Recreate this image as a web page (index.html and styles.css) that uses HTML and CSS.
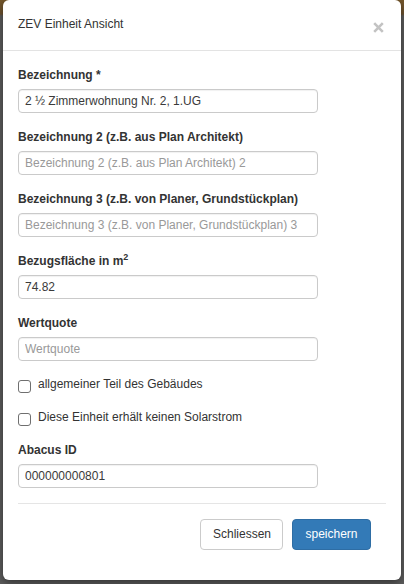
FILE: index.html
```html
<!DOCTYPE html>
<html lang="de">
<head>
<meta charset="utf-8">
<title>ZEV Einheit Ansicht</title>
<link rel="stylesheet" href="styles.css">
</head>
<body>
<div class="modal">
  <div class="modal-header">
    <h4 class="modal-title">ZEV Einheit Ansicht</h4>
    <button class="close" type="button" aria-label="Close">
      <svg width="11" height="11" viewBox="0 0 11 11"><path d="M1.2 1.2 L9.8 9.8 M9.8 1.2 L1.2 9.8" stroke="#c3c3c3" stroke-width="2.6" stroke-linecap="butt"/></svg>
    </button>
  </div>
  <div class="modal-body">
    <div class="group">
      <label class="lbl">Bezeichnung *</label>
      <input class="inp" type="text" value="2 ½ Zimmerwohnung Nr. 2, 1.UG">
    </div>
    <div class="group">
      <label class="lbl">Bezeichnung 2 (z.B. aus Plan Architekt)</label>
      <input class="inp" type="text" placeholder="Bezeichnung 2 (z.B. aus Plan Architekt) 2">
    </div>
    <div class="group">
      <label class="lbl">Bezeichnung 3 (z.B. von Planer, Grundstückplan)</label>
      <input class="inp" type="text" placeholder="Bezeichnung 3 (z.B. von Planer, Grundstückplan) 3">
    </div>
    <div class="group">
      <label class="lbl">Bezugsfläche in m<sup class="sup">2</sup></label>
      <input class="inp" type="text" value="74.82">
    </div>
    <div class="group last">
      <label class="lbl">Wertquote</label>
      <input class="inp" type="text" placeholder="Wertquote">
    </div>
    <label class="check"><input class="cb" type="checkbox"><span>allgemeiner Teil des Gebäudes</span></label>
    <label class="check"><input class="cb" type="checkbox"><span>Diese Einheit erhält keinen Solarstrom</span></label>
    <div class="group abacus">
      <label class="lbl">Abacus ID</label>
      <input class="inp" type="text" value="000000000801">
    </div>
  </div>
  <div class="modal-footer">
    <button class="btn btn-default" type="button">Schliessen</button>
    <button class="btn btn-primary" type="button">speichern</button>
  </div>
</div>
</body>
</html>
```

FILE: styles.css
```css
html, body {
  margin: 0;
  padding: 0;
}
body {
  width: 404px;
  height: 584px;
  overflow: hidden;
  background: linear-gradient(#75572b 0, #6e5330 14px, #5d5d5d 16px, #5d5d5d 100%);
  font-family: "Liberation Sans", Arial, sans-serif;
  font-size: 12px;
  color: #333;
}
.modal {
  margin: 0 3px;
  width: 398px;
  height: 580px;
  background: #fff;
  border-radius: 6px;
  box-shadow: 0 3px 10px rgba(0,0,0,.45);
  display: flex;
  flex-direction: column;
  box-sizing: border-box;
}
.modal-header {
  height: 50px;
  padding: 0 17px 0 15px;
  border-bottom: 1px solid #e3e3e3;
  display: flex;
  align-items: center;
  justify-content: space-between;
}
.modal-title {
  margin: 0 0 2px;
  font-size: 12px;
  font-weight: normal;
  line-height: 18px;
  color: #333;
}
.close {
  border: 0;
  background: none;
  padding: 0;
  margin-top: 5px;
  width: 11px;
  height: 11px;
  display: block;
}
.close svg { display: block; }
.modal-body {
  padding: 15px 15px 15px;
}
.group {
  margin-bottom: 15px;
}
.group.last { margin-bottom: 0; }
.group.abacus { margin: 14px 0 0; }
.lbl {
  display: block;
  font-weight: bold;
  line-height: 18px;
  margin-bottom: 5px;
  color: #333;
}
.sup {
  font-size: 9px;
  line-height: 0;
  vertical-align: 5px;
}
.inp {
  display: block;
  box-sizing: border-box;
  width: 300px;
  height: 24px;
  margin: 0;
  padding: 0 6px;
  border: 1px solid #cacaca;
  border-radius: 4px;
  box-shadow: inset 0 1px 1px rgba(0,0,0,.06);
  font-family: "Liberation Sans", Arial, sans-serif;
  font-size: 12px;
  color: #3a3a3a;
  background: #fff;
  outline: none;
}
.inp::placeholder { color: #999; }
.check {
  display: flex;
  align-items: flex-start;
  gap: 7px;
  margin-top: 13px;
  line-height: 20px;
  color: #333;
}
.cb {
  appearance: none;
  -webkit-appearance: none;
  margin: 6px 0 0;
  width: 13px;
  height: 13px;
  box-sizing: border-box;
  border: 1px solid #6f6f6f;
  border-radius: 3px;
  background: #fff;
  flex: none;
}
.modal-footer {
  margin: 0 15px;
  border-top: 1px solid #e5e5e5;
  padding: 15px 15px 0;
  display: flex;
  justify-content: flex-end;
  gap: 9px;
}
.btn {
  height: 31px;
  box-sizing: border-box;
  padding: 0 12px;
  border-radius: 4px;
  font-family: "Liberation Sans", Arial, sans-serif;
  font-size: 12px;
  line-height: 29px;
  cursor: pointer;
}
.btn-default {
  background: #fff;
  border: 1px solid #cbcbcb;
  color: #333;
  width: 83px;
}
.btn-primary {
  background: #337ab7;
  border: 1px solid #2e6da4;
  color: #fff;
  width: 79px;
}
```
